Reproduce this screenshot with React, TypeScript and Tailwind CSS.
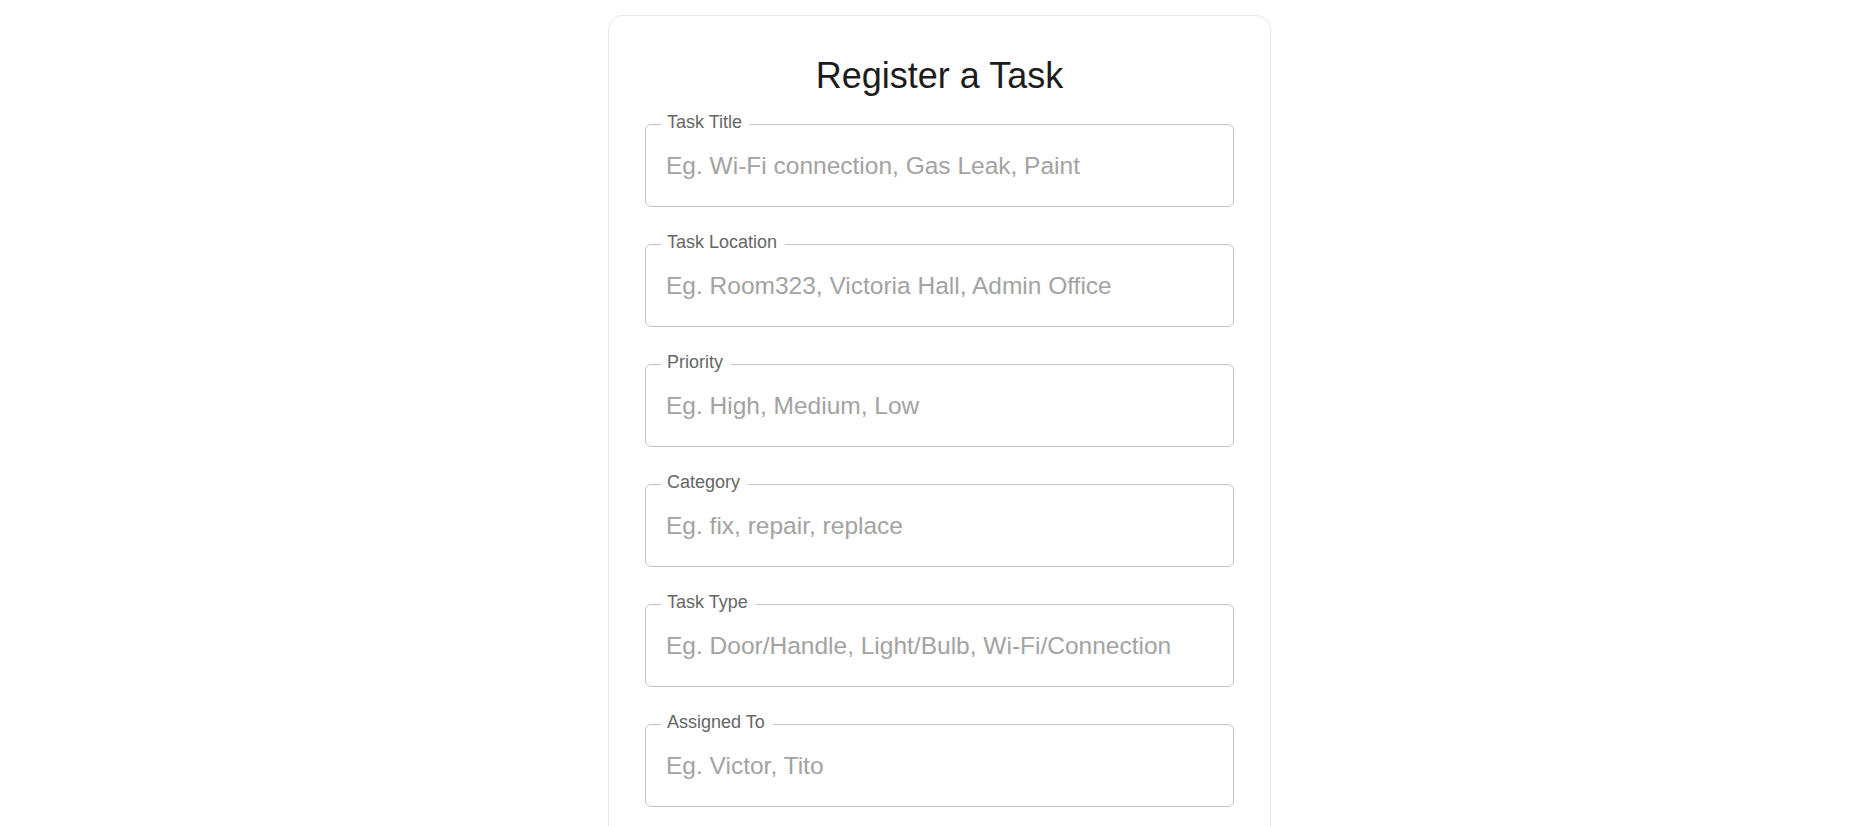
const fields = [
  { label: "Task Title", placeholder: "Eg. Wi-Fi connection, Gas Leak, Paint" },
  { label: "Task Location", placeholder: "Eg. Room323, Victoria Hall, Admin Office" },
  { label: "Priority", placeholder: "Eg. High, Medium, Low" },
  { label: "Category", placeholder: "Eg. fix, repair, replace" },
  { label: "Task Type", placeholder: "Eg. Door/Handle, Light/Bulb, Wi-Fi/Connection" },
  { label: "Assigned To", placeholder: "Eg. Victor, Tito" },
];

function Field({ label, placeholder }: { label: string; placeholder: string }) {
  return (
    <div className="relative h-[83px] rounded-[6px] border border-[#c4c4c4] flex items-center">
      <span className="absolute left-[15px] top-[-13px] bg-white pl-[6px] pr-[8px] text-[18px] leading-[21px] text-[#666666]">
        {label}
      </span>
      <input
        className="w-full bg-transparent px-[20px] text-[24.5px] leading-[28px] text-[#212121] outline-none placeholder:text-[#a3a3a3]"
        placeholder={placeholder}
      />
    </div>
  );
}

export default function App() {
  return (
    <div
      className="min-h-screen bg-white flex justify-center pl-[6px] pt-[15px]"
      style={{ fontFamily: '"Liberation Sans", Arial, sans-serif' }}
    >
      <div className="w-[663px] rounded-t-[15px] border border-b-0 border-[#e8e8e8] px-[36px] pt-[39px] pb-10">
        <h1 className="text-center text-[36px] leading-[41px] text-[#1c1c1c]">Register a Task</h1>

        {/* フォーム */}
        <div className="mt-[28px] flex flex-col gap-[37px]">
          {fields.map((f) => (
            <Field key={f.label} label={f.label} placeholder={f.placeholder} />
          ))}
        </div>
      </div>
    </div>
  );
}
